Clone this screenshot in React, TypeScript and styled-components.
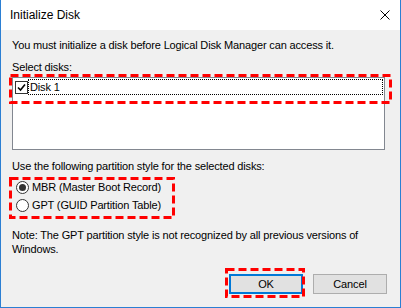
import styled, { createGlobalStyle } from 'styled-components';

const GlobalStyle = createGlobalStyle`
  html, body {
    margin: 0;
    padding: 0;
    background: #ffffff;
  }
  * {
    box-sizing: border-box;
  }
`;

const Window = styled.div`
  width: 401px;
  height: 308px;
  display: flex;
  flex-direction: column;
  border: 1px solid #2b7fd3;
  border-top: none;
  font-family: 'Liberation Sans', Arial, sans-serif;
  font-size: 11px;
  letter-spacing: -0.15px;
  color: #000;
`;

const TitleBar = styled.div`
  height: 30px;
  flex: none;
  background: #ffffff;
  display: flex;
  align-items: center;
  justify-content: space-between;
  padding: 0 10px 0 9px;
`;

const Title = styled.span`
  font-size: 12px;
  letter-spacing: 0;
  color: #000;
`;

const Body = styled.div`
  flex: 1;
  background: #f0f0f0;
  padding: 9px 13px 0 11px;
  display: flex;
  flex-direction: column;
`;

const Text = styled.div<{ $top?: number }>`
  line-height: 13px;
  margin-top: ${({ $top }) => $top ?? 0}px;
  white-space: nowrap;
`;

const NoteText = styled.div`
  line-height: 14px;
  margin-top: 9px;
`;

const ListArea = styled.div`
  position: relative;
  margin-top: 3px;
  width: 373px;
`;

const ListBox = styled.div`
  height: 73px;
  background: #ffffff;
  border: 1px solid #828790;
  padding: 1px 1px 0 2px;
`;

const ListRow = styled.div`
  height: 16px;
  display: flex;
  align-items: center;
`;

const CheckBox = styled.div`
  width: 13px;
  height: 13px;
  border: 1px solid #333;
  background: #fff;
  display: flex;
  align-items: center;
  justify-content: center;
  flex: none;
`;

const FocusLabel = styled.div`
  flex: 1;
  height: 16px;
  border: 1px dotted #000;
  padding-left: 1px;
  display: flex;
  align-items: center;
`;

const Highlight = styled.svg<{ $left: number; $top: number; $w: number; $h: number }>`
  position: absolute;
  left: ${({ $left }) => $left}px;
  top: ${({ $top }) => $top}px;
  width: ${({ $w }) => $w}px;
  height: ${({ $h }) => $h}px;
  overflow: visible;
  pointer-events: none;
`;

const Framed = styled.div`
  position: relative;
`;

const RadioGroup = styled(Framed)`
  margin: 4px 0 0 -3px;
  width: 166px;
  height: 42px;
  padding: 1px 0 0 7px;
`;

const RadioRow = styled.div`
  height: 18px;
  display: flex;
  align-items: center;
  gap: 3px;
`;

const RadioCircle = styled.div<{ $checked?: boolean }>`
  width: 13px;
  height: 13px;
  border-radius: 50%;
  border: 1px solid #333;
  background: #fff;
  display: flex;
  align-items: center;
  justify-content: center;
  flex: none;

  &::after {
    content: '';
    display: ${({ $checked }) => ($checked ? 'block' : 'none')};
    width: 7px;
    height: 7px;
    border-radius: 50%;
    background: #333;
  }
`;

const ButtonRow = styled.div`
  margin-top: 12px;
  display: flex;
  justify-content: flex-end;
  align-items: flex-start;
  gap: 8px;
`;

const ButtonFrame = styled(Framed)`
  padding: 6px 2px 4px 4px;
`;

const Button = styled.div<{ $default?: boolean }>`
  width: 74px;
  height: 20px;
  display: flex;
  align-items: center;
  justify-content: center;
  background: #e1e1e1;
  border: ${({ $default }) => ($default ? '2px solid #0078d7' : '1px solid #adadad')};
  font-size: 11px;
`;

const CancelButton = styled(Button)`
  margin-top: 6px;
`;

function DashFrame({ left, top, w, h }: { left: number; top: number; w: number; h: number }) {
  return (
    <Highlight $left={left} $top={top} $w={w} $h={h} viewBox={`0 0 ${w} ${h}`}>
      <rect
        x={1.5}
        y={1.5}
        width={w - 3}
        height={h - 3}
        fill="none"
        stroke="#ff0000"
        strokeWidth={3}
        strokeDasharray="8 4"
      />
    </Highlight>
  );
}

export default function App() {
  return (
    <>
      <GlobalStyle />
      <Window>
        <TitleBar>
          <Title>Initialize Disk</Title>
          <svg width="10" height="10" viewBox="0 0 10 10">
            <path d="M0.5 0.5 L9.5 9.5 M9.5 0.5 L0.5 9.5" stroke="#000" strokeWidth="1" />
          </svg>
        </TitleBar>
        <Body>
          <Text>You must initialize a disk before Logical Disk Manager can access it.</Text>
          <Text $top={9}>Select disks:</Text>
          <ListArea>
            <ListBox>
              <ListRow>
                <CheckBox>
                  <svg width="9" height="9" viewBox="0 0 9 9">
                    <path d="M1 4.5 L3.5 7 L8 1.5" fill="none" stroke="#000" strokeWidth="1.6" />
                  </svg>
                </CheckBox>
                <FocusLabel>Disk 1</FocusLabel>
              </ListRow>
            </ListBox>
            <DashFrame left={-3} top={-3} w={383} h={30} />
          </ListArea>
          <Text $top={10}>Use the following partition style for the selected disks:</Text>
          <RadioGroup>
            <RadioRow>
              <RadioCircle $checked />
              <span>MBR (Master Boot Record)</span>
            </RadioRow>
            <RadioRow>
              <RadioCircle />
              <span>GPT (GUID Partition Table)</span>
            </RadioRow>
            <DashFrame left={0} top={0} w={166} h={42} />
          </RadioGroup>
          <NoteText>
            Note: The GPT partition style is not recognized by all previous versions of
            <br />
            Windows.
          </NoteText>
          <ButtonRow>
            <ButtonFrame>
              <Button $default>OK</Button>
              <DashFrame left={0} top={0} w={80} h={30} />
            </ButtonFrame>
            <CancelButton>Cancel</CancelButton>
          </ButtonRow>
        </Body>
      </Window>
    </>
  );
}
